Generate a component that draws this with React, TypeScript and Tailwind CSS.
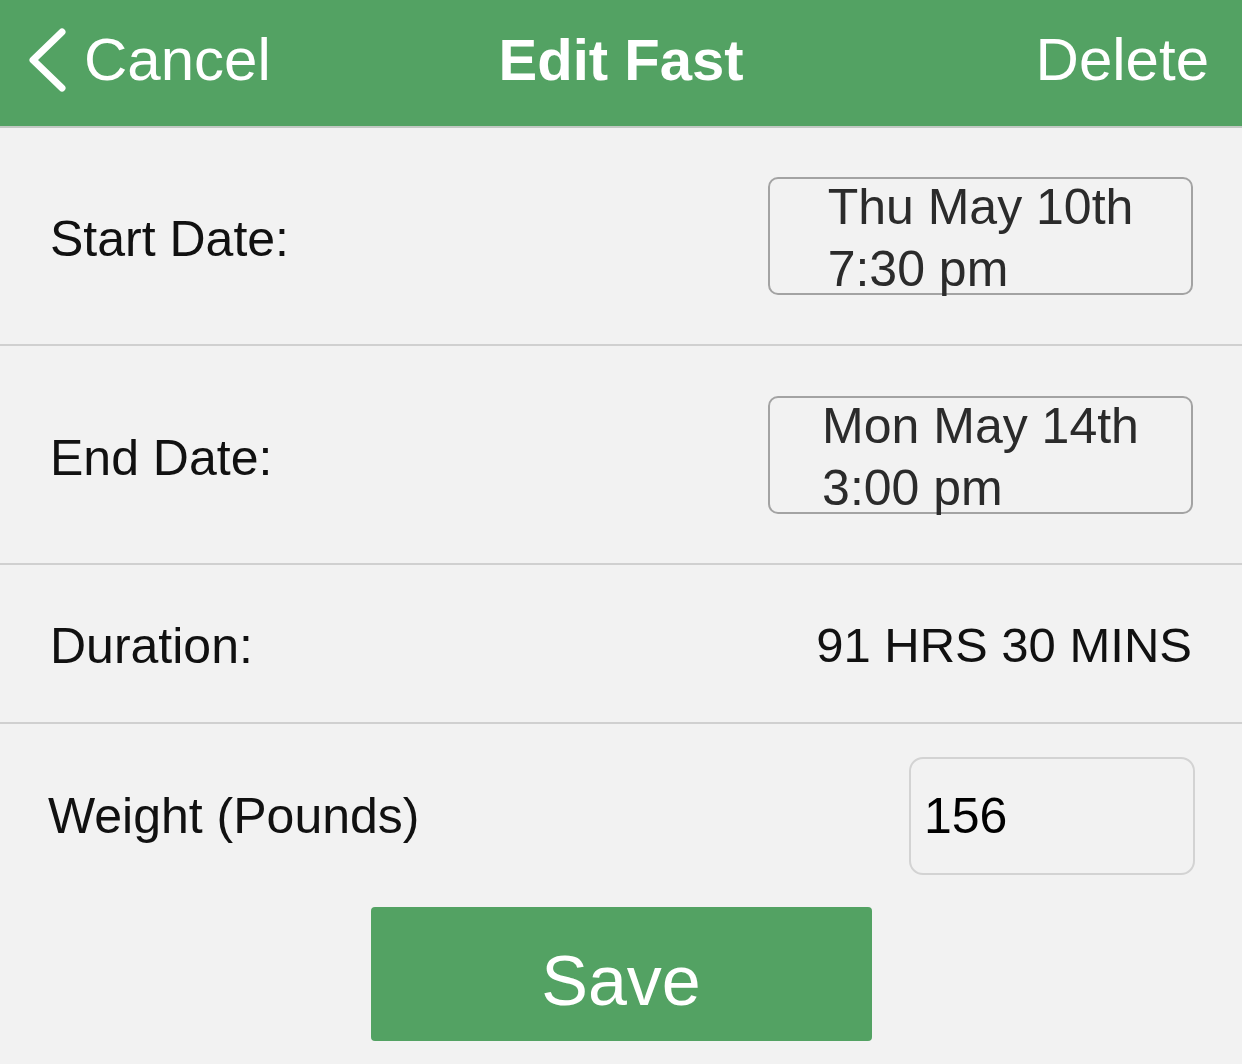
const font = { fontFamily: '"Liberation Sans", Arial, sans-serif' };

function DateBox({ date, time }: { date: string; time: string }) {
  return (
    <div className="flex h-[118px] w-[425px] items-center justify-center rounded-[10px] border-2 border-[#a3a3a3]">
      <div className="pt-[4px] text-left text-[50px] leading-[62px] text-[#2b2b2b]">
        <div>{date}</div>
        <div>{time}</div>
      </div>
    </div>
  );
}

export default function App() {
  return (
    <div className="h-[1064px] w-[1242px] overflow-hidden bg-[#f2f2f2]" style={font}>
      {/* header */}
      <div className="flex h-[128px] items-center border-b-2 border-[#c3c9c4] bg-[#53a263] pb-[6px] text-white">
        <div className="flex flex-1 items-center">
          <svg width="46" height="68" viewBox="0 0 46 68" className="ml-[24px] mr-[14px]">
            <path d="M38 6 L9 34 L38 62" fill="none" stroke="white" strokeWidth="7" strokeLinecap="round" strokeLinejoin="round" />
          </svg>
          <span className="text-[60px] leading-none">Cancel</span>
        </div>
        <div className="text-[58px] font-bold leading-none">Edit Fast</div>
        <div className="flex flex-1 justify-end">
          <span className="mr-[33px] text-[60px] leading-none">Delete</span>
        </div>
      </div>

      {/* start date */}
      <div className="flex h-[218px] items-center justify-between border-b-2 border-[#d0d0d0] pl-[50px] pr-[49px]">
        <span className="pt-[6px] text-[50px] leading-none text-[#111]">Start Date:</span>
        <DateBox date="Thu May 10th" time="7:30 pm" />
      </div>

      {/* end date */}
      <div className="flex h-[219px] items-center justify-between border-b-2 border-[#d0d0d0] pl-[50px] pr-[49px]">
        <span className="pt-[6px] text-[50px] leading-none text-[#111]">End Date:</span>
        <DateBox date="Mon May 14th" time="3:00 pm" />
      </div>

      {/* duration */}
      <div className="flex h-[159px] items-center justify-between border-b-2 border-[#d0d0d0] pl-[50px] pr-[50px]">
        <span className="pt-[4px] text-[50px] leading-none text-[#111]">Duration:</span>
        <span className="pt-[4px] text-[49px] leading-none text-[#111]">91 HRS 30 MINS</span>
      </div>

      {/* weight */}
      <div className="flex h-[183px] items-center justify-between pl-[48px] pr-[47px]">
        <span className="text-[50px] leading-none text-[#111]">Weight (Pounds)</span>
        <div className="flex h-[118px] w-[286px] items-center rounded-[14px] border-2 border-[#d3d3d3] pl-[13px]">
          <span className="text-[50px] leading-none text-black">156</span>
        </div>
      </div>

      {/* save */}
      <button className="mx-auto flex h-[134px] w-[501px] items-center justify-center rounded-[4px] bg-[#53a263] pt-[14px] text-[70px] leading-none text-white">
        Save
      </button>
    </div>
  );
}
